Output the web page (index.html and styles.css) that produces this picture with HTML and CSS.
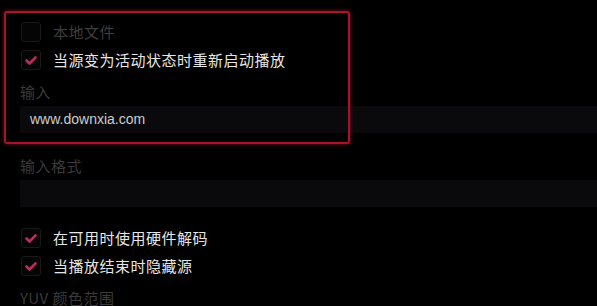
FILE: index.html
```html
<!DOCTYPE html>
<html lang="zh-CN">
<head>
<meta charset="utf-8">
<title>媒体源属性</title>
<link rel="stylesheet" href="styles.css">
</head>
<body>
<div class="panel">
  <div class="row muted">
    <span class="box"></span>
    <span class="text">本地文件</span>
  </div>
  <div class="row">
    <span class="box checked"><svg viewBox="0 0 20 20" width="20" height="20"><path d="M5.5 10.5 L8.5 13.5 L14.5 7.5" /></svg></span>
    <span class="text">当源变为活动状态时重新启动播放</span>
  </div>
  <div class="label">输入</div>
  <div class="field">www.downxia.com</div>
  <div class="label label-gap">输入格式</div>
  <div class="field"></div>
  <div class="row row-gap">
    <span class="box checked"><svg viewBox="0 0 20 20" width="20" height="20"><path d="M5.5 10.5 L8.5 13.5 L14.5 7.5" /></svg></span>
    <span class="text">在可用时使用硬件解码</span>
  </div>
  <div class="row">
    <span class="box checked"><svg viewBox="0 0 20 20" width="20" height="20"><path d="M5.5 10.5 L8.5 13.5 L14.5 7.5" /></svg></span>
    <span class="text">当播放结束时隐藏源</span>
  </div>
  <div class="label yuv">YUV 颜色范围</div>
</div>
<div class="highlight"></div>
</body>
</html>
```

FILE: styles.css
```css
html, body {
  margin: 0;
  padding: 0;
  background: #000;
  overflow: hidden;
}
body {
  width: 597px;
  height: 306px;
  position: relative;
  font-family: "Noto Sans CJK SC", "Noto Sans", sans-serif;
  font-size: 15px;
  color: #dcdcdc;
}
.panel {
  display: flex;
  flex-direction: column;
  padding: 18px 0 0 20px;
}
.row {
  display: flex;
  align-items: center;
  height: 28px;
  gap: 12px;
}
.row-gap {
  margin-top: 17px;
}
.box {
  box-sizing: border-box;
  width: 20px;
  height: 20px;
  margin-left: 1px;
  border: 1.5px solid #191919;
  border-radius: 3px;
  background: #050505;
  display: flex;
  align-items: center;
  justify-content: center;
}
.box svg {
  display: block;
  margin: -1.5px;
}
.box svg path {
  fill: none;
  stroke: #c02a62;
  stroke-width: 2.6;
  stroke-linecap: round;
  stroke-linejoin: round;
}
.text {
  letter-spacing: 0.5px;
  line-height: 20px;
  color: #e6e6e6;
}
.muted .text {
  color: #3e3e3e;
}
.label {
  height: 20px;
  line-height: 20px;
  margin-top: 8px;
  color: #3a3a3a;
  letter-spacing: 0.5px;
}
.label-gap {
  margin-top: 23px;
}
.yuv {
  margin-top: 8px;
}
.field {
  box-sizing: border-box;
  height: 27px;
  margin-top: 4px;
  background: #0a0a0c;
  padding-left: 10px;
  font-family: "Liberation Sans", Arial, sans-serif;
  font-size: 14px;
  line-height: 27px;
  color: #cccccc;
}
.highlight {
  position: absolute;
  left: 4px;
  top: 11px;
  width: 346px;
  height: 133px;
  box-sizing: border-box;
  border: 2px solid #a8122a;
  border-radius: 3px;
  box-shadow: 0 0 4px rgba(176, 20, 44, 0.7);
}
```
